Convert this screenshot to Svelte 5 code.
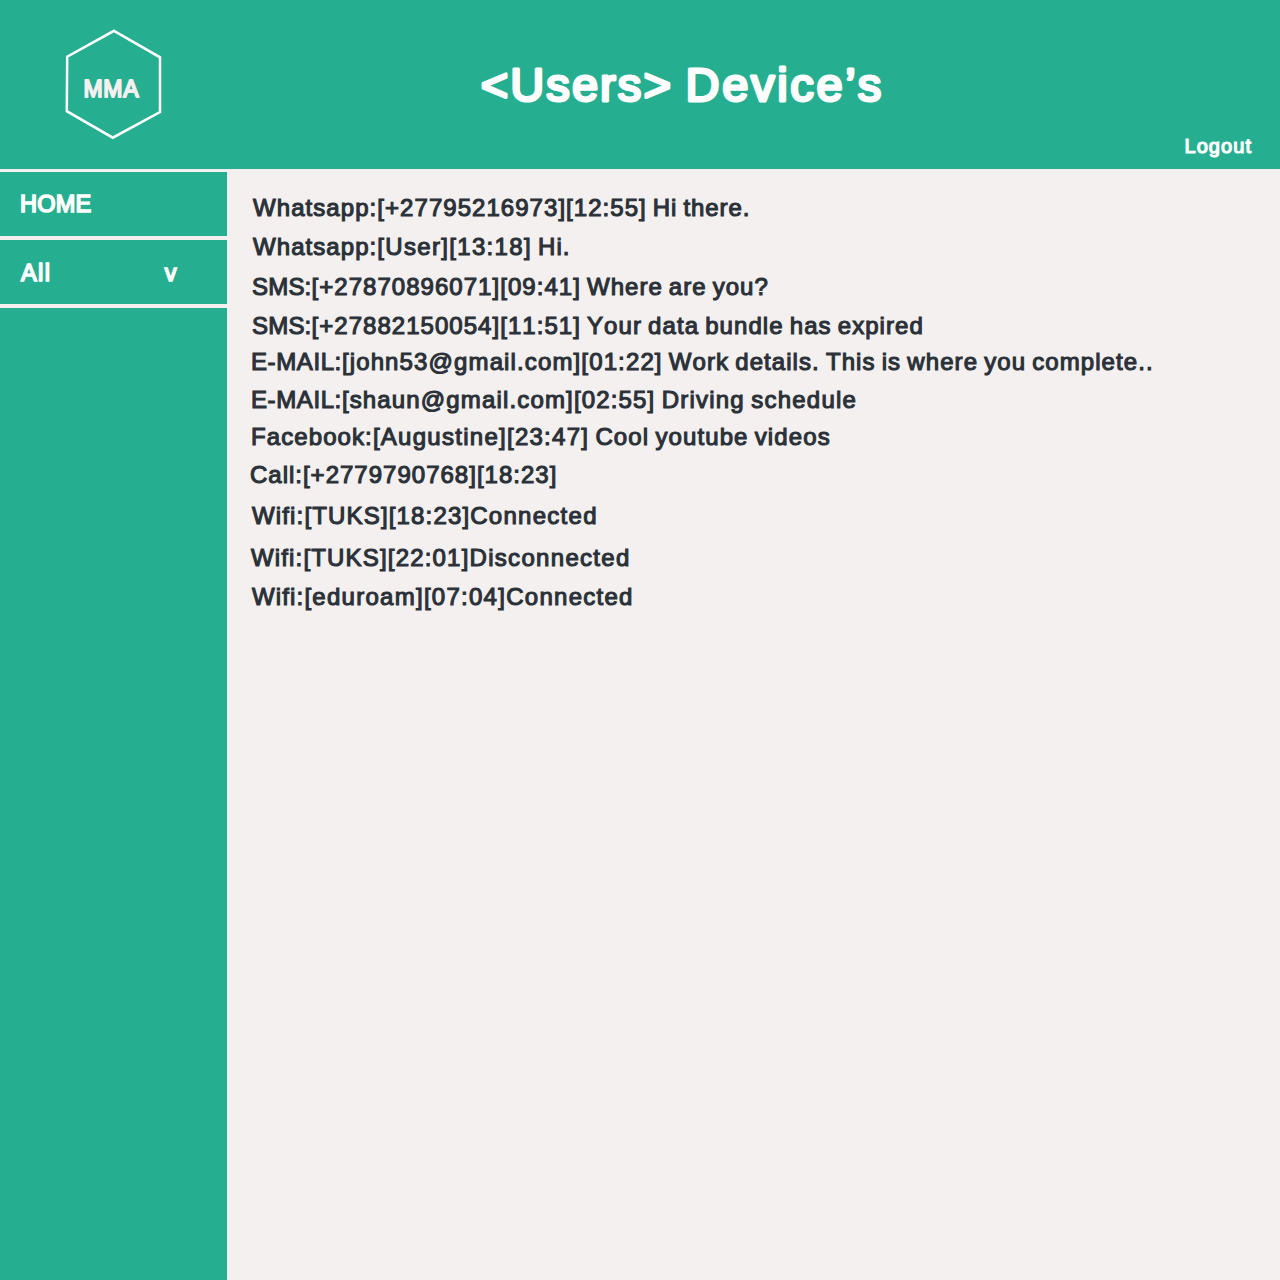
<script>
  // height: row height and x: left inset in px; t: letter spacing of label, tag and body
  const messages = [
    { label: 'Whatsapp:', tag: '[+27795216973][12:55]', body: ' Hi there.', height: 39, x: 26, t: [1.07, 1.04, 0.95] },
    { label: 'Whatsapp:', tag: '[User][13:18]', body: ' Hi.', height: 40, x: 26, t: [1.07, 1.32, 1.05] },
    { label: 'SMS:', tag: '[+27870896071][09:41]', body: ' Where are you?', height: 39, x: 25, t: [0.2, 1.04, 1.02] },
    { label: 'SMS:', tag: '[+27882150054][11:51]', body: ' Your data bundle has expired', height: 36, x: 25, t: [0.2, 1.04, 1.06] },
    { label: 'E-MAIL:', tag: '[john53@gmail.com][01:22]', body: ' Work details. This is where you complete..', height: 38, x: 24, t: [0.6, 1.13, 1.07] },
    { label: 'E-MAIL:', tag: '[shaun@gmail.com][02:55]', body: ' Driving schedule', height: 37, x: 24, t: [0.6, 1.15, 1.23] },
    { label: 'Facebook:', tag: '[Augustine][23:47]', body: ' Cool youtube videos', height: 38, x: 24, t: [1.09, 1.27, 1.11] },
    { label: 'Call:', tag: '[+2779790768][18:23]', body: '', height: 41, x: 23, t: [0.98, 1.01, 1] },
    { label: 'Wifi:', tag: '[TUKS][18:23]', body: 'Connected', height: 42, x: 25, t: [1.15, 1.16, 1.27] },
    { label: 'Wifi:', tag: '[TUKS][22:01]', body: 'Disconnected', height: 39, x: 24, t: [1.15, 1.18, 1.31] },
    { label: 'Wifi:', tag: '[eduroam][07:04]', body: 'Connected', height: 39, x: 25, t: [1.15, 1.27, 1.27] }
  ];
</script>

<div class="page">
  <header>
    <div class="brand">
      <svg class="logo" width="98" height="112" viewBox="0 0 98 112">
        <path d="M50 2.8 L96 29.3 V84 L48.8 109.7 L2.8 83.2 L3.2 28.7 Z" fill="none" stroke="#fff" stroke-width="2.5" />
        <text x="19.4" y="68.5" class="mark">MMA</text>
      </svg>
    </div>
    <h1>
      <svg width="420" height="70" viewBox="0 0 420 70">
        <text x="1.7" y="44.5" class="title users">&lt;Users&gt;</text>
        <text x="206.5" y="44.5" class="title device">Device’s</text>
      </svg>
    </h1>
    <a class="logout" href="#logout">Logout</a>
  </header>
  <div class="body">
    <nav>
      <a class="item home" href="#home">HOME</a>
      <a class="item all" href="#all"><span>All</span><span class="caret">v</span></a>
      <div class="fill"></div>
    </nav>
    <main>
      {#each messages as m}
        <p style="--h: {m.height}px; --x: {m.x}px; --a: {m.t[0]}px; --b: {m.t[1]}px; --c: {m.t[2]}px"><span class="label">{m.label}</span><span class="tag">{m.tag}</span><span class="text">{m.body}</span></p>
      {/each}
    </main>
  </div>
</div>

<style>
  :global(body) { margin: 0; background: #f4f0ef; }
  .page {
    width: 1280px;
    height: 1280px;
    display: flex;
    flex-direction: column;
    overflow: hidden;
    font-family: 'Liberation Sans', Arial, sans-serif;
    color: #fff;
    background: #f4f0ef;
  }
  a { color: inherit; text-decoration: none; }
  svg { display: block; }
  header {
    height: 169px;
    flex: none;
    display: flex;
    background: #26ae90;
  }
  .brand { width: 227px; padding: 28px 0 0 64px; box-sizing: border-box; }
  .mark {
    font-size: 23px;
    letter-spacing: .8px;
    fill: #f4f0ef;
    stroke: #f4f0ef;
    stroke-width: 1.8px;
    stroke-linejoin: round;
  }
  h1 {
    margin: 0;
    padding: 56px 0 0 252px;
    flex: 1;
    font-size: 47px;
    font-weight: 400;
  }
  .title {
    fill: #fff;
    stroke: #fff;
    stroke-width: 3px;
    stroke-linejoin: round;
  }
  .users { letter-spacing: 2.1px; }
  .device { letter-spacing: 2.7px; }
  .logout {
    align-self: flex-end;
    padding: 0 28px 11px 0;
    font-size: 20px;
    line-height: 24px;
    letter-spacing: 1.05px;
    -webkit-text-stroke: 1.2px #fff;
  }
  .body { flex: 1; display: flex; }
  nav { width: 227px; display: flex; flex-direction: column; gap: 4px; padding-top: 3px; }
  .item {
    height: 64px;
    box-sizing: border-box;
    padding: 0 49px 0 20px;
    display: flex;
    justify-content: space-between;
    align-items: center;
    background: #26ae90;
    font-size: 23.5px;
    letter-spacing: .2px;
    -webkit-text-stroke: 1.6px #fff;
  }
  .all { padding-top: 2px; padding-left: 21px; letter-spacing: 1.4px; }
  .fill { flex: 1; background: #26ae90; }
  main { flex: 1; padding-top: 24px; }
  p {
    margin: 0;
    height: var(--h);
    padding-left: var(--x);
    font-size: 24px;
    line-height: 30px;
    white-space: pre;
    word-spacing: -1.6px;
    color: #2b3138;
    -webkit-text-stroke: 1.1px #2b3138;
    font-kerning: none;
  }
  .label { letter-spacing: var(--a); }
  .tag { letter-spacing: var(--b); }
  .text { letter-spacing: var(--c); }
</style>
